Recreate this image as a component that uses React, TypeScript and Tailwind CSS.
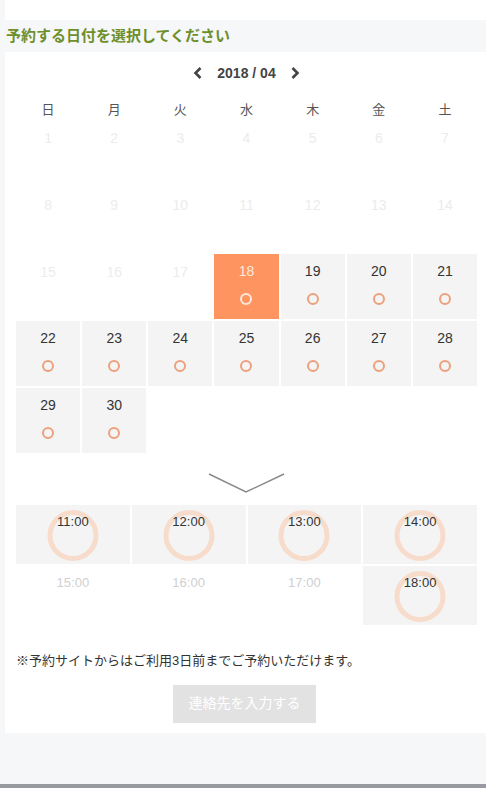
import React from "react";

const WEEK = ["日", "月", "火", "水", "木", "金", "土"];
const TIMES = [
  { t: "11:00", ok: true },
  { t: "12:00", ok: true },
  { t: "13:00", ok: true },
  { t: "14:00", ok: true },
  { t: "15:00", ok: false },
  { t: "16:00", ok: false },
  { t: "17:00", ok: false },
  { t: "18:00", ok: true },
];

const DayCell = ({ day }: { day: number | null }) => {
  if (day === null) return <div className="h-[65px]" />;
  if (day < 18) {
    return (
      <div className="flex h-[65px] justify-center pt-[8px] text-[14px] text-[#ececec]">
        {day}
      </div>
    );
  }
  const selected = day === 18;
  return (
    <div
      className={`flex h-[65px] flex-col items-center pt-[8px] text-[14px] ${
        selected ? "bg-[#fe9560] text-[#fde8dc]" : "bg-[#f4f4f4] text-[#333]"
      }`}
    >
      <span className="leading-[18px]">{day}</span>
      <span
        className={`mt-[13px] h-[12px] w-[12px] rounded-full border-2 ${
          selected ? "border-[#fbe9dd]" : "border-[#eca07c]"
        }`}
      />
    </div>
  );
};

const App = () => {
  const days: (number | null)[] = [];
  for (let i = 1; i <= 30; i++) days.push(i);
  while (days.length < 35) days.push(null);

  return (
    <div className="min-h-[788px] bg-[#f6f7f9] font-['Liberation_Sans','Noto_Sans_CJK_JP',sans-serif]">
      <div className="ml-[5px] h-[20px] bg-white" />
      <div className="flex h-[32px] items-center pl-[6px]">
        <h2 className="text-[15px] font-bold text-[#6e8f2c]">
          予約する日付を選択してください
        </h2>
      </div>
      <div className="ml-[5px] bg-white pb-[10px] pl-[11px] pr-[9px]">
        <div className="flex h-[40px] items-center justify-center gap-[14px] pt-[2px] text-[#444]">
          <svg width="10" height="14" viewBox="0 0 10 14">
            <path d="M7.5 2 L2.5 7 L7.5 12" fill="none" stroke="#444" strokeWidth="2.6" />
          </svg>
          <span className="text-[14px] font-bold">2018 / 04</span>
          <svg width="10" height="14" viewBox="0 0 10 14">
            <path d="M2.5 2 L7.5 7 L2.5 12" fill="none" stroke="#444" strokeWidth="2.6" />
          </svg>
        </div>
        <div className="grid grid-cols-7 gap-x-[2px] pt-[8px]">
          {WEEK.map((w) => (
            <div key={w} className="flex h-[20px] items-start justify-center text-[13px] text-[#555]">
              {w}
            </div>
          ))}
        </div>
        <div className="grid grid-cols-7 gap-[2px]">
          {days.map((d, i) => (
            <DayCell key={i} day={d} />
          ))}
        </div>
        <div className="flex justify-center pt-[19px] pb-[11px]">
          <svg width="78" height="22" viewBox="0 0 78 22">
            <path d="M1 2 L38 20 L76 2" fill="none" stroke="#8a8a8a" strokeWidth="1.5" />
          </svg>
        </div>
        <div className="grid grid-cols-4 gap-[2px]">
          {TIMES.map(({ t, ok }) => (
            <div
              key={t}
              className={`relative flex h-[59px] justify-center pt-[9px] text-[13px] ${
                ok ? "bg-[#f4f4f4] text-[#333]" : "text-[#cfcfcf]"
              }`}
            >
              {ok && (
                <span className="absolute left-1/2 top-[5px] h-[51px] w-[51px] -translate-x-1/2 rounded-full border-[5px] border-[#f8dccb]" />
              )}
              <span className="relative leading-[16px]">{t}</span>
            </div>
          ))}
        </div>
        <p className="mt-[26px] text-[13px] text-[#333]">
          ※予約サイトからはご利用3日前までご予約いただけます。
        </p>
        <div className="mt-[14px] flex justify-center pr-[4px]">
          <button className="h-[38px] w-[143px] bg-[#e2e2e2] text-[14px] text-white">
            連絡先を入力する
          </button>
        </div>
      </div>
      <div className="h-[51px]" />
      <div className="h-[4px] bg-[#979b9f]" />
    </div>
  );
};

export default App;
